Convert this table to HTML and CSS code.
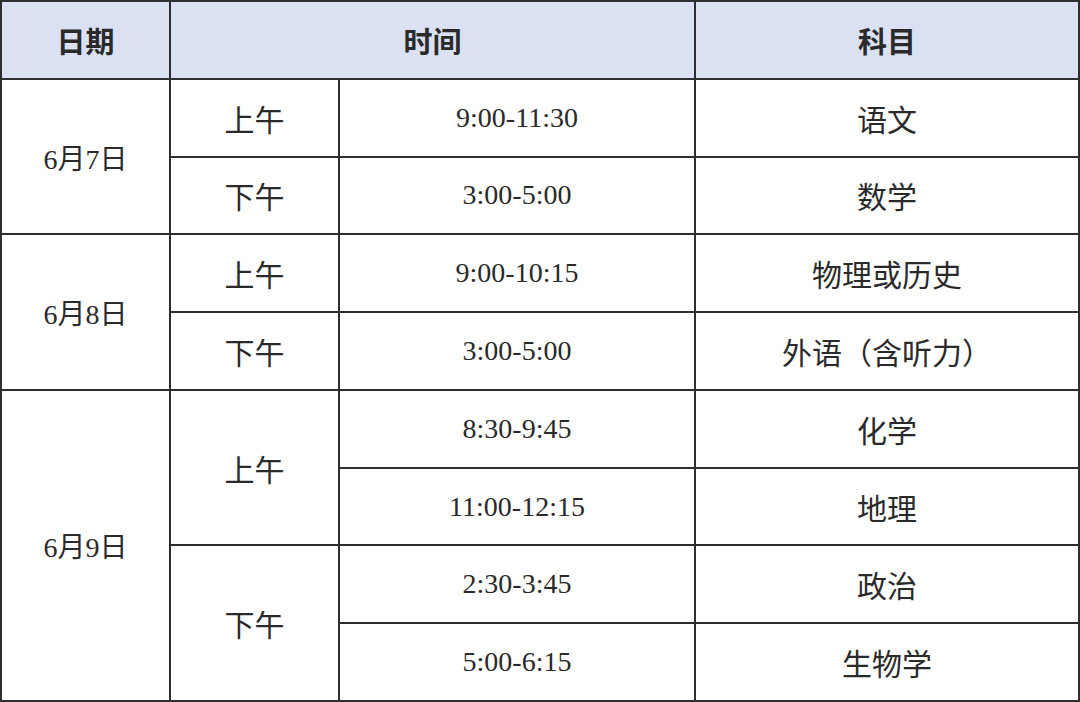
FILE: index.html
```html
<!DOCTYPE html>
<html lang="zh-CN">
<head>
<meta charset="utf-8">
<link rel="stylesheet" href="styles.css">
</head>
<body>
<div class="table">
  <div class="cell head">日期</div>
  <div class="cell head span2">时间</div>
  <div class="cell head">科目</div>

  <div class="cell date r2">6月7日</div>
  <div class="cell">上午</div>
  <div class="cell num">9:00-11:30</div>
  <div class="cell">语文</div>
  <div class="cell">下午</div>
  <div class="cell num">3:00-5:00</div>
  <div class="cell">数学</div>

  <div class="cell date r2">6月8日</div>
  <div class="cell">上午</div>
  <div class="cell num">9:00-10:15</div>
  <div class="cell">物理或历史</div>
  <div class="cell">下午</div>
  <div class="cell num">3:00-5:00</div>
  <div class="cell">外语（含听力）</div>

  <div class="cell date r4">6月9日</div>
  <div class="cell r2">上午</div>
  <div class="cell num">8:30-9:45</div>
  <div class="cell">化学</div>
  <div class="cell num">11:00-12:15</div>
  <div class="cell">地理</div>
  <div class="cell r2">下午</div>
  <div class="cell num">2:30-3:45</div>
  <div class="cell">政治</div>
  <div class="cell num">5:00-6:15</div>
  <div class="cell">生物学</div>
</div>
</body>
</html>
```
FILE: styles.css
```css
html, body {
  margin: 0;
  padding: 0;
  background: #ffffff;
}
.table {
  width: 1080px;
  height: 702px;
  box-sizing: border-box;
  padding: 2px;
  background: #2e2e2e;
  display: grid;
  grid-template-columns: 167px 167px 354px 382px;
  grid-template-rows: repeat(9, 1fr);
  gap: 2px;
}
.cell {
  background: #ffffff;
  display: flex;
  align-items: center;
  justify-content: center;
  font-family: "Liberation Serif", "Noto Sans CJK SC", serif;
  font-size: 30px;
  color: #2a2a2a;
  white-space: nowrap;
}
.num {
  font-size: 28px;
}
.date {
  font-size: 28px;
}
.head {
  background: #d9e1f3;
  font-family: "Noto Sans CJK SC", sans-serif;
  font-weight: 700;
  font-size: 29px;
  color: #2a2a2a;
}
.span2 { grid-column: span 2; }
.r2 { grid-row: span 2; }
.r4 { grid-row: span 4; }
```
